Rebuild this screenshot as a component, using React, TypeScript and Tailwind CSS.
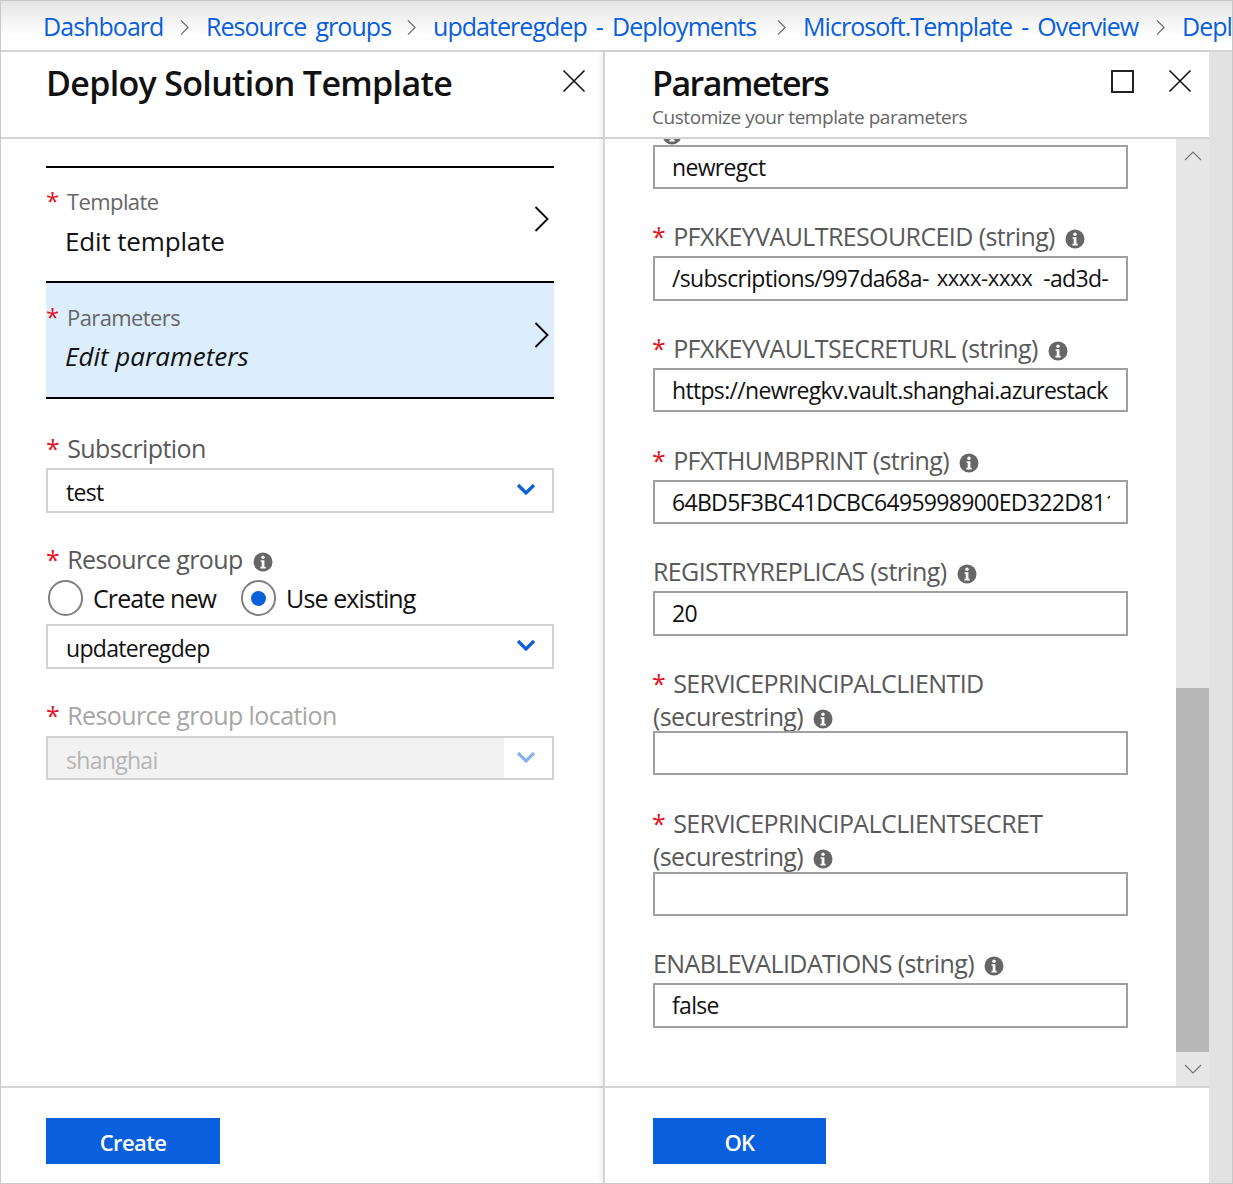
import React from "react";

const Chevron = ({ cls }: { cls: string }) => (
  <svg className={cls} viewBox="0 0 10 18" fill="none" stroke="currentColor" strokeWidth="1.3">
    <path d="M1 1l8 8-8 8" />
  </svg>
);

const Close = () => (
  <svg className="h-[24px] w-[24px]" viewBox="0 0 24 24" fill="none" stroke="#111" strokeWidth="1.6">
    <path d="M1.5 1.5l21 21M22.5 1.5l-21 21" />
  </svg>
);

const Info = ({ cls = "" }: { cls?: string }) => (
  <svg className={"inline-block h-[20px] w-[20px] shrink-0 " + cls} viewBox="0 0 20 20">
    <circle cx="10" cy="10" r="9.5" fill="#666" />
    <circle cx="10" cy="5.2" r="1.7" fill="#fff" />
    <path d="M7.6 8.2h3.8v6.6h1.3v1.6H7.4v-1.6h1.3v-5H7.6z" fill="#fff" />
  </svg>
);

const Down = ({ light }: { light?: boolean }) => (
  <svg className="h-[14px] w-[20px]" viewBox="0 0 20 14" fill="none" stroke={light ? "#88b2ea" : "#0a5fdc"} strokeWidth="3.2">
    <path d="M2 3l8 8 8-8" />
  </svg>
);

const Star = ({ cls = "" }: { cls?: string }) => (
  <span className={"text-[#e81123] " + cls}>*</span>
);

const Crumb = ({ t, w, last }: { t: string; w?: string; last?: boolean }) => (
  <>
    <span className={"shrink-0 whitespace-nowrap text-[#0a5fdc] " + (w ?? "")}>{t}</span>
    {!last && <Chevron cls="mx-[17px] h-[17px] w-[9px] shrink-0 text-[#666]" />}
  </>
);

const Select = ({ v, disabled, h }: { v: string; disabled?: boolean; h: string }) => (
  <div className={"flex w-[508px] border-2 border-[#d2d2d2] " + h}>
    <div className={"flex flex-1 items-center pl-[18px] pt-[4px] text-[23px] tracking-[-0.7px] " + (disabled ? "bg-[#f2f2f2] text-[#b5b5b5]" : "text-[#111]")}>{v}</div>
    <div className="flex w-[48px] items-center justify-center pb-[3px] pr-[5px]">
      <Down light={disabled} />
    </div>
  </div>
);

const SelectRow = ({ label, value, italic, blue }: { label: string; value: string; italic?: boolean; blue?: boolean }) => (
  <div className={"relative flex flex-col pl-[20px] " + (blue ? "h-[114px] bg-[#dceefe] pt-[18px]" : "h-[113px] pt-[17px]")}>
    <Star cls={"absolute left-[0px] text-[24px] leading-[32px] " + (blue ? "top-[18px]" : "top-[17px]")} />
    <div className="pl-[1px] text-[22px] leading-[32px] text-[#666]">{label}</div>
    <div className={"-ml-px text-[26px] leading-[34px] text-[#111] " + (italic ? "mt-[6px] italic tracking-[0px]" : "mt-[7px] tracking-[-0.15px]")}>{value}</div>
    <Chevron cls={"absolute right-[5px] h-[28px] w-[15px] text-[#111] " + (blue ? "top-[38px]" : "top-[37px]")} />
  </div>
);

const FieldLabel = ({ children, disabled }: { children: React.ReactNode; disabled?: boolean }) => (
  <div className={"flex h-[34px] items-center pb-[2px] text-[25px] leading-[32px] " + (disabled ? "text-[#a6a6a6]" : "text-[#595959]")}>
    {children}
  </div>
);

const Input = ({ h, value }: { h: string; value?: React.ReactNode }) => (
  <div className={"w-[475px] border-2 border-[#a0a0a0] pl-[17px] pr-[16px] " + h}>
    <div className="flex h-full items-center overflow-hidden whitespace-nowrap text-[23px] tracking-[-0.68px] text-[#111]">{value}</div>
  </div>
);

const Field = ({ mt, h, required, label, value }: { mt: string; h: string; required?: boolean; label: string; value?: React.ReactNode }) => (
  <div className={"flex flex-col " + mt}>
    <div className="-ml-px">
      <FieldLabel>
        {required && <Star cls="mr-[8px]" />}
        <span className={"whitespace-nowrap " + (required ? "" : "ml-px")}>{label}</span>
        <Info cls="ml-[10px] mt-[6px]" />
      </FieldLabel>
    </div>
    <Input h={"mt-[2px] " + h} value={value} />
  </div>
);

const TwoLine = ({ mt, label, inputMt }: { mt: string; label: string; inputMt: string }) => (
  <div className={"flex flex-col " + mt}>
    <div className="-ml-px">
      <FieldLabel>
        <Star cls="mr-[8px]" />
        <span>{label}</span>
      </FieldLabel>
      <div className="-mt-px">
        <FieldLabel>
          <span className="ml-px">(securestring)</span>
          <Info cls="ml-[10px] mt-[6px]" />
        </FieldLabel>
      </div>
    </div>
    <Input h={"h-[44px] " + inputMt} />
  </div>
);

const Radio = ({ on, label }: { on?: boolean; label: string }) => (
  <div className="flex items-center">
    <div className="flex h-[36px] w-[35px] items-center justify-center rounded-full border-2 border-[#808080] bg-white">
      {on && <div className="h-[15px] w-[15px] rounded-full bg-[#0a5fdc]" />}
    </div>
    <span className="ml-[10px] text-[25px] leading-[34px] tracking-[-0.9px] text-[#111]">{label}</span>
  </div>
);

export default function App() {
  return (
    <div className="flex h-[1184px] w-[1233px] flex-col overflow-hidden border border-[#c8c8c8] bg-white font-['Open_Sans','Noto_Sans',sans-serif] tracking-[-0.6px]">
      <div className="flex h-[51px] shrink-0 items-center overflow-hidden border-b-2 border-[#d4d4d4] bg-gradient-to-b from-[#e4e4e4] to-white to-70% pl-[42px] pt-[3px] text-[25px] tracking-[-0.95px] [word-spacing:3.5px]">
        <Crumb t="Dashboard" w="w-[120px]" />
        <Crumb t="Resource groups" w="w-[184px]" />
        <Crumb t="updateregdep - Deployments" w="w-[327px]" />
        <Crumb t="Microsoft.Template - Overview" w="w-[336px]" />
        <Crumb t="Deployment" last />
      </div>
      <div className="flex min-h-0 flex-1">
        <div className="flex w-[602px] shrink-0 flex-col">
          <div className="flex h-[87px] shrink-0 items-start justify-between border-b-2 border-[#d4d4d4] pl-[45px] pr-[17px]">
            <h1 className="mt-[9px] text-[34px] font-semibold leading-[44px] tracking-[-0.67px] text-[#111]">Deploy Solution Template</h1>
            <div className="mt-[17px]"><Close /></div>
          </div>
          <div className="flex flex-1 flex-col px-[45px] pt-[27px] text-[24px]">
            <div className="w-[508px]">
              <div className="h-[2px] bg-black" />
              <SelectRow label="Template" value="Edit template" />
              <div className="h-[2px] bg-black" />
              <SelectRow label="Parameters" value="Edit parameters" italic blue />
              <div className="h-[2px] bg-black" />
            </div>
            <div className="mt-[33px]">
              <FieldLabel><Star cls="mr-[8px]" />Subscription</FieldLabel>
            </div>
            <div className="mt-[2px]"><Select v="test" h="h-[45px]" /></div>
            <div className="mt-[30px]">
              <FieldLabel><Star cls="mr-[8px]" />Resource group<Info cls="ml-[10px] mt-[6px]" /></FieldLabel>
            </div>
            <div className="flex h-[47px] gap-[25px] pb-[5px] pl-[2px]">
              <Radio label="Create new" />
              <Radio on label="Use existing" />
            </div>
            <Select v="updateregdep" h="h-[45px]" />
            <div className="mt-[30px]">
              <FieldLabel disabled><Star cls="mr-[8px]" />Resource group location</FieldLabel>
            </div>
            <div className="mt-[3px]"><Select v="shanghai" disabled h="h-[44px]" /></div>
          </div>
          <div className="flex h-[97px] shrink-0 border-t-2 border-[#d4d4d4] pl-[45px] pt-[30px]">
            <button className="h-[46px] w-[174px] bg-[#0a5fdc] pt-[2px] text-[22px] font-semibold text-white">Create</button>
          </div>
        </div>
        <div className="flex w-[606px] shrink-0 flex-col border-l-2 border-[#d4d4d4] shadow-[-3px_0_4px_rgba(0,0,0,0.06)]">
          <div className="relative z-10 flex h-[87px] shrink-0 items-start border-b-2 border-[#d4d4d4] bg-white pl-[47px] pr-[17px]">
            <div className="flex-1">
              <h2 className="mt-[9px] text-[34px] font-semibold leading-[44px] tracking-[-1.5px] text-[#111]">Parameters</h2>
              <p className="text-[19px] leading-[24px] tracking-[-0.45px] text-[#666]">Customize your template parameters</p>
            </div>
            <div className="mt-[17px] flex items-center gap-[34px]">
              <div className="h-[23px] w-[23px] border-2 border-[#222]" />
              <Close />
            </div>
          </div>
          <div className="flex min-h-0 flex-1">
            <div className="flex-1 overflow-hidden pl-[48px]">
              <div className="flex h-[6px] items-end pl-[9px]">
                <Info />
              </div>
              <Input h="h-[44px]" value="newregct" />
              <Field mt="mt-[31px]" h="h-[45px]" required label="PFXKEYVAULTRESOURCEID (string)" value={<>/subscriptions/997da68a-<span className="ml-[8px] mr-[11px] -translate-y-px text-[22px] font-medium tracking-[-0.4px]">xxxx-xxxx</span>-ad3d-</>} />
              <Field mt="mt-[31px]" h="h-[44px]" required label="PFXKEYVAULTSECRETURL (string)" value="https://newregkv.vault.shanghai.azurestack" />
              <Field mt="mt-[32px]" h="h-[44px]" required label="PFXTHUMBPRINT (string)" value="64BD5F3BC41DCBC6495998900ED322D811" />
              <Field mt="mt-[31px]" h="h-[45px]" label="REGISTRYREPLICAS (string)" value="20" />
              <TwoLine mt="mt-[31px]" label="SERVICEPRINCIPALCLIENTID" inputMt="-mt-[3px]" />
              <TwoLine mt="mt-[32px]" label="SERVICEPRINCIPALCLIENTSECRET" inputMt="-mt-[2px]" />
              <Field mt="mt-[31px]" h="h-[45px]" label="ENABLEVALIDATIONS (string)" value="false" />
            </div>
            <div className="flex w-[33px] shrink-0 flex-col bg-[#e6e6e6]">
              <div className="flex h-[549px] justify-center pt-[12px]">
                <svg className="h-[10px] w-[18px]" viewBox="0 0 18 10" fill="none" stroke="#777" strokeWidth="1.2"><path d="M1 9l8-8 8 8" /></svg>
              </div>
              <div className="h-[364px] bg-[#b8b8b8]" />
              <div className="flex flex-1 justify-center pt-[12px]">
                <svg className="h-[10px] w-[18px]" viewBox="0 0 18 10" fill="none" stroke="#777" strokeWidth="1.2"><path d="M1 1l8 8 8-8" /></svg>
              </div>
            </div>
          </div>
          <div className="flex h-[97px] shrink-0 border-t-2 border-[#d4d4d4] pl-[48px] pt-[30px]">
            <button className="h-[46px] w-[173px] bg-[#0a5fdc] pt-[2px] text-[22px] font-semibold text-white">OK</button>
          </div>
        </div>
        <div className="flex-1 bg-[#e2e2e2]" />
      </div>
    </div>
  );
}
